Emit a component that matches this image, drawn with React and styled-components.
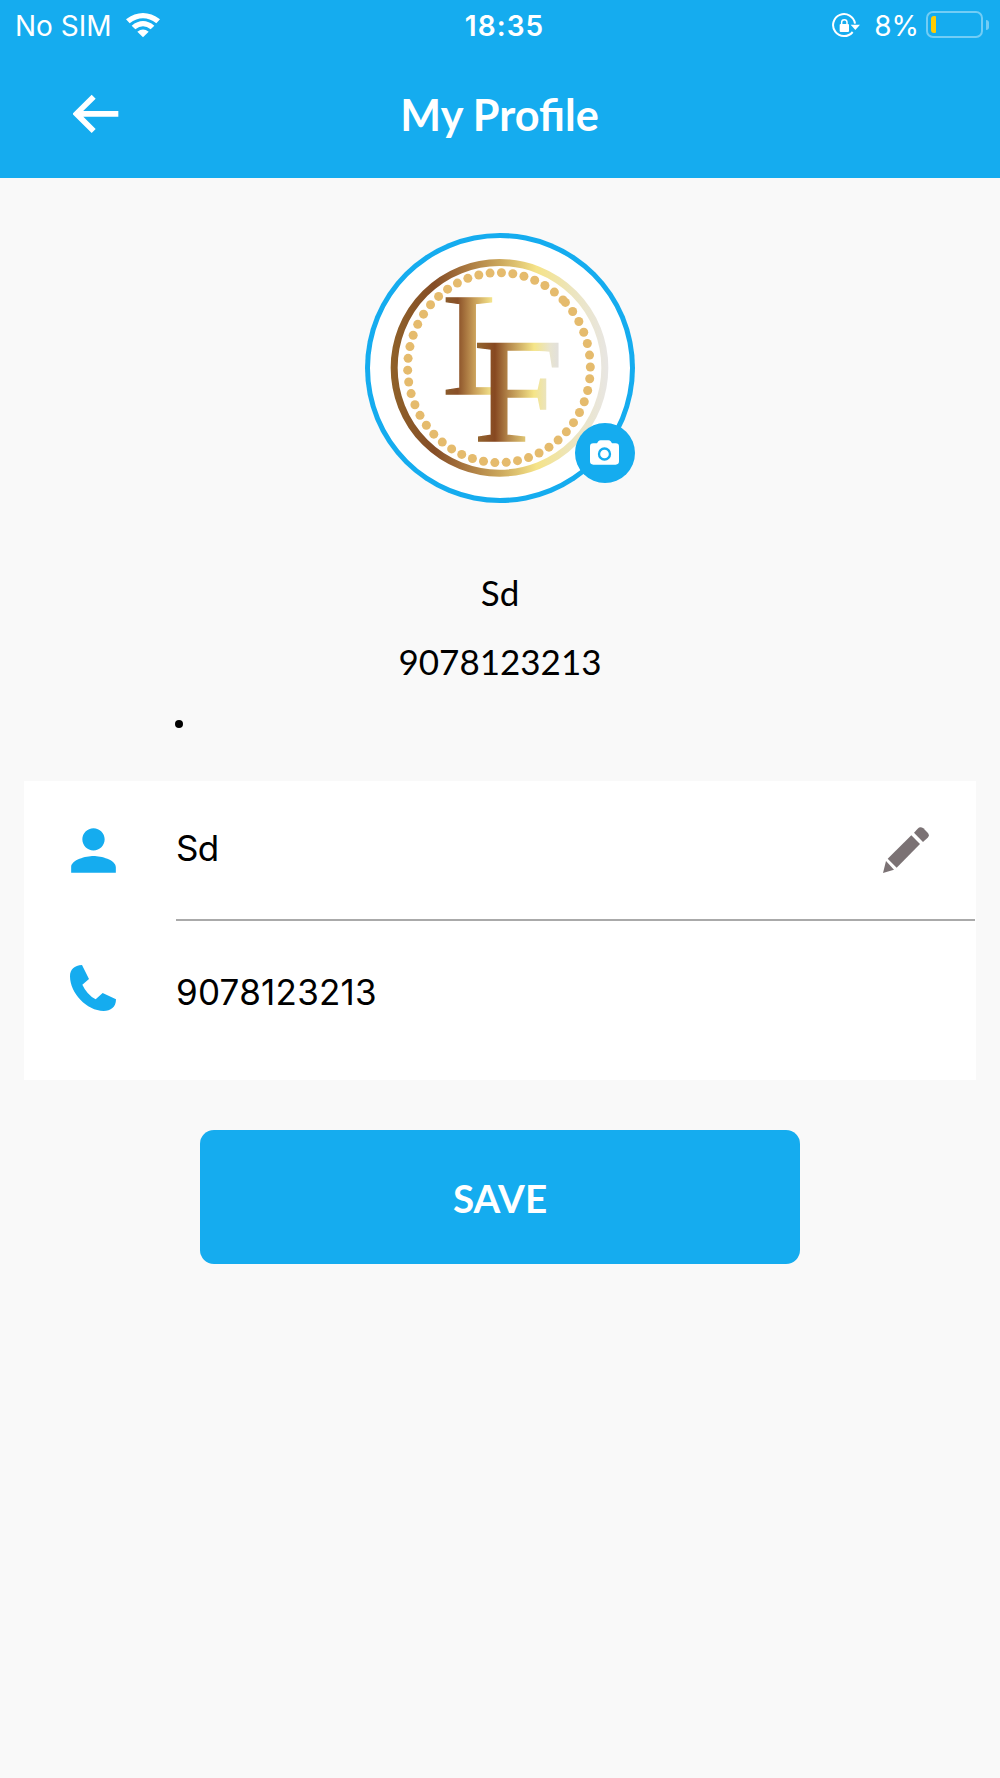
import React from 'react';
import styled, { createGlobalStyle } from 'styled-components';
import { MdPerson } from 'react-icons/md';

const BLUE = '#15acef';

const DOT_STEP = 7.157;
const ringDots = Array.from({ length: 51 }, (_, i) => {
  const angle = (((i - 6) * DOT_STEP - 0.43) * Math.PI) / 180;
  return { cx: 447 + 274 * Math.cos(angle), cy: 442 + 285 * Math.sin(angle) };
});

const WifiIcon = () => (
  <svg width="34" height="25" viewBox="378 36 102 75" fill="#fff">
    <path d="M378 55 Q429 17 480 55 L469 67 Q429 37 389 67 Z" />
    <path d="M395 74 Q429 46 463 74 L452 85 Q429 66 406 85 Z" />
    <path d="M412 92 Q429 79 446 92 L429 109 Z" />
  </svg>
);

const LockIcon = () => (
  <svg width="28" height="26" viewBox="96 34 84 78">
    <path
      d="M158 91 A33 33 0 1 1 165 66"
      fill="none"
      stroke="#fff"
      strokeWidth="6"
    />
    <path d="M152 69 H180 L166 85 Z" fill="#fff" />
    <rect x="119" y="67" width="28" height="24" rx="3" fill="#fff" />
    <path
      d="M125 70 V62 A8 8 0 0 1 141 62 V70"
      fill="none"
      stroke="#fff"
      strokeWidth="4.5"
    />
  </svg>
);

const BackIcon = () => (
  <svg width="46" height="40" viewBox="218 281 138 120">
    <path
      d="M354 340.5 H230 M280 289 L228 340.5 L280 392"
      fill="none"
      stroke="#fff"
      strokeWidth="17"
    />
  </svg>
);

const CameraIcon = () => (
  <svg width="29" height="25" viewBox="720 660 87 75">
    <path
      d="M730 670 H741 L745 664 Q748 661 752 661 H775 Q779 661 782 664 L786 670 H797 Q807 670 807 680 V724 Q807 734 797 734 H730 Q720 734 720 724 V680 Q720 670 730 670 Z"
      fill="#fff"
    />
    <circle cx="763.5" cy="702" r="16.5" fill="none" stroke={BLUE} strokeWidth="7" />
  </svg>
);

const PhoneIcon = () => (
  <svg width="46" height="46" viewBox="210 105 138 138">
    <path
      d="M246 105 L267 147 L247 164 Q261 194 287 208 L308 189 L348 208 C348 232 332 243 311 243 C260 243 210 189 210 139 C210 118 223 106 246 105 Z"
      fill={BLUE}
    />
  </svg>
);

const PencilIcon = () => (
  <svg width="46" height="46" viewBox="129 170 138 138" fill="#7b7274">
    <path d="M138 272 L162 298 L129 308 Z" />
    <path d="M214 195 L240 221 L170 292 L143 265 Z" />
    <path d="M222 187 L233 175 Q241 167 250 174 L263 187 Q270 195 263 202 L249 215 Z" />
  </svg>
);

const LogoMark = () => (
  <LogoSvg viewBox="45 38 810 810">
    <defs>
      <linearGradient id="ringGold" gradientUnits="userSpaceOnUse" x1="122" y1="0" x2="775" y2="0">
        <stop offset="0" stopColor="#8f6129" />
        <stop offset="0.2" stopColor="#854d26" />
        <stop offset="0.34" stopColor="#a8763f" />
        <stop offset="0.5" stopColor="#cba75c" />
        <stop offset="0.67" stopColor="#f5e388" />
        <stop offset="0.84" stopColor="#ece5c0" />
        <stop offset="1" stopColor="#e8e6e4" />
      </linearGradient>
      <linearGradient id="goldL" gradientUnits="userSpaceOnUse" x1="288" y1="0" x2="428" y2="0">
        <stop offset="0" stopColor="#8a5a2a" />
        <stop offset="0.25" stopColor="#8a5028" />
        <stop offset="0.6" stopColor="#c79c57" />
        <stop offset="1" stopColor="#f6e78e" />
      </linearGradient>
      <linearGradient id="goldF" gradientUnits="userSpaceOnUse" x1="381" y1="0" x2="625" y2="0">
        <stop offset="0" stopColor="#93652f" />
        <stop offset="0.22" stopColor="#874821" />
        <stop offset="0.38" stopColor="#b3854a" />
        <stop offset="0.7" stopColor="#f5e588" />
        <stop offset="0.9" stopColor="#e8e4cf" />
        <stop offset="1" stopColor="#e2e0dc" />
      </linearGradient>
      <clipPath id="clipL">
        <rect x="280" y="220" width="148" height="310" />
      </clipPath>
    </defs>
    <circle cx="448.5" cy="442.5" r="316" fill="none" stroke="url(#ringGold)" strokeWidth="21" />
    {ringDots.map((dot, i) => (
      <circle key={i} cx={dot.cx} cy={dot.cy} r="13.5" fill="#e5bb6d" />
    ))}
    <g clipPath="url(#clipL)">
      <Letter
        x="275"
        y="520"
        fontSize="438"
        textLength="296"
        lengthAdjust="spacingAndGlyphs"
        fill="url(#goldL)"
        stroke="url(#goldL)"
      >
        L
      </Letter>
    </g>
    <Letter
      x="369"
      y="663"
      fontSize="444"
      textLength="272"
      lengthAdjust="spacingAndGlyphs"
      fill="url(#goldF)"
      stroke="url(#goldF)"
    >
      F
    </Letter>
  </LogoSvg>
);

const App = () => {
  return (
    <Screen>
      <GlobalStyle />
      <Header>
        <StatusBar>
          <StatusLeft>
            <Carrier>No SIM</Carrier>
            <WifiIcon />
          </StatusLeft>
          <Clock>18:35</Clock>
          <StatusRight>
            <LockIcon />
            <Percent>8%</Percent>
            <Battery>
              <BatteryLevel />
            </Battery>
            <BatteryTip />
          </StatusRight>
        </StatusBar>
        <NavBar>
          <BackButton aria-label="Back">
            <BackIcon />
          </BackButton>
          <Title>My Profile</Title>
        </NavBar>
      </Header>
      <Summary>
        <Avatar>
          <LogoMark />
          <CameraBadge>
            <CameraIcon />
          </CameraBadge>
        </Avatar>
        <SummaryText>Sd</SummaryText>
        <SummaryText>9078123213</SummaryText>
      </Summary>
      <Bullet />
      <Card>
        <Row>
          <PersonCell>
            <MdPerson size={67} color={BLUE} />
          </PersonCell>
          <RowBody $divider>
            <Value>Sd</Value>
            <PencilIcon />
          </RowBody>
        </Row>
        <Row $height="134px">
          <IconCell>
            <PhoneIcon />
          </IconCell>
          <RowBody>
            <PhoneValue>9078123213</PhoneValue>
          </RowBody>
        </Row>
      </Card>
      <SaveButton>SAVE</SaveButton>
    </Screen>
  );
};

export default App;

const GlobalStyle = createGlobalStyle`
  * {
    box-sizing: border-box;
  }
  body {
    margin: 0;
    background: #f9f9f9;
  }
  svg {
    display: block;
    flex-shrink: 0;
  }
`;

const Screen = styled.div`
  width: 1000px;
  height: 1778px;
  display: flex;
  flex-direction: column;
  background: #f9f9f9;
  color: #000;
  font-family: Lato, sans-serif;
`;

const Header = styled.header`
  height: 178px;
  background: ${BLUE};
  color: #fff;
`;

const StatusBar = styled.div`
  height: 51px;
  display: grid;
  grid-template-columns: 1fr auto 1fr;
  align-items: center;
  padding: 0 11px 0 15px;
  font-family: Inter, sans-serif;
  font-size: 28px;
  line-height: 34px;
`;

const StatusLeft = styled.div`
  display: flex;
  align-items: center;
  gap: 14px;
`;

const Carrier = styled.span`
  font-weight: 400;
`;

const Clock = styled.span`
  font-weight: 600;
  letter-spacing: 1.1px;
  margin-left: 5px;
`;

const StatusRight = styled.div`
  display: flex;
  align-items: center;
  justify-content: flex-end;
`;

const Percent = styled.span`
  font-weight: 400;
  margin: 0 7px 0 14px;
`;

const Battery = styled.div`
  width: 57px;
  height: 27px;
  padding: 3px;
  margin-bottom: 2px;
  border: 2px solid rgba(255, 255, 255, 0.4);
  border-radius: 7px;
`;

const BatteryLevel = styled.div`
  width: 5px;
  height: 17px;
  border-radius: 3px 1px 1px 3px;
  background: #ffcc02;
`;

const BatteryTip = styled.div`
  width: 3px;
  height: 10px;
  margin: 0 0 2px 3px;
  border-radius: 0 5px 5px 0;
  background: rgba(255, 255, 255, 0.4);
`;

const NavBar = styled.div`
  height: 127px;
  display: grid;
  grid-template-columns: 200px 1fr 200px;
  align-items: center;
`;

const BackButton = styled.button`
  justify-self: start;
  margin: 0 0 2px 73px;
  padding: 0;
  border: 0;
  background: none;
`;

const Title = styled.h1`
  margin: 0 1px 2px 0;
  font-size: 43.2px;
  font-weight: 700;
  line-height: 54px;
  text-align: center;
`;

const Summary = styled.section`
  display: flex;
  flex-direction: column;
  align-items: center;
  padding-top: 55px;
`;

const Avatar = styled.div`
  position: relative;
  width: 270px;
  height: 270px;
  margin-bottom: 55px;
  border-radius: 50%;
  background: #fff;
  box-shadow: inset 0 0 0 5px ${BLUE};
`;

const LogoSvg = styled.svg`
  width: 270px;
  height: 270px;
`;

const Letter = styled.text`
  font-family: 'Liberation Serif', serif;
  stroke-width: 4px;
`;

const CameraBadge = styled.div`
  position: absolute;
  right: 0;
  bottom: 20px;
  width: 60px;
  height: 60px;
  display: flex;
  align-items: center;
  justify-content: center;
  padding: 0 1px 2px 0;
  border-radius: 50%;
  background: ${BLUE};
`;

const SummaryText = styled.p`
  margin: 0;
  font-size: 35px;
  line-height: 69px;
`;

const Bullet = styled.div`
  width: 8px;
  height: 8px;
  margin: 24px 0 53px 175px;
  border-radius: 50%;
  background: #000;
`;

const Card = styled.section`
  height: 299px;
  margin: 0 24px;
  background: #fff;
`;

const Row = styled.div`
  display: flex;
  height: ${(props) => props.$height || '140px'};
`;

const IconCell = styled.div`
  width: 152px;
  display: flex;
  align-items: center;
  padding-left: 46px;
`;

const PersonCell = styled(IconCell)`
  padding: 0 0 2px 36px;
`;

const RowBody = styled.div`
  flex: 1;
  display: flex;
  align-items: center;
  justify-content: space-between;
  margin-right: 1px;
  padding-right: 46px;
  border-bottom: ${(props) => (props.$divider ? '2px solid #aaa' : '0')};
`;

const Value = styled.span`
  padding-bottom: 4px;
  font-family: Inter, sans-serif;
  font-size: 35px;
  line-height: 42px;
  letter-spacing: -0.8px;
`;

const PhoneValue = styled(Value)`
  padding: 8px 0 0;
  letter-spacing: 0.25px;
`;

const SaveButton = styled.button`
  width: 600px;
  height: 134px;
  margin: 50px auto 0;
  padding: 1px 0 0;
  border: 0;
  border-radius: 14px;
  background: ${BLUE};
  color: #fff;
  font-family: Lato, sans-serif;
  font-size: 38.6px;
  font-weight: 700;
`;
